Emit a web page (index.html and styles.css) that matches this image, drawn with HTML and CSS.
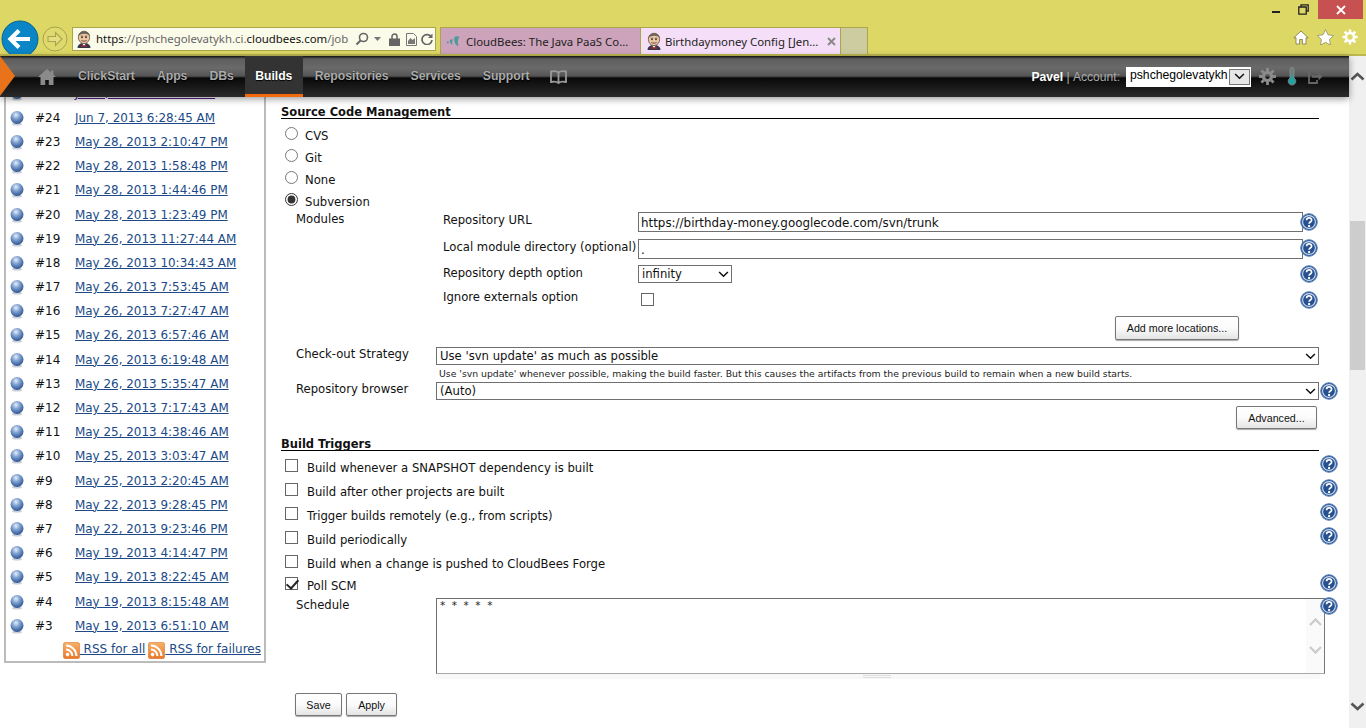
FILE: index.html
```html
<!DOCTYPE html>
<html lang="en">
<head>
<meta charset="utf-8">
<title>Birthdaymoney Config [Jenkins]</title>
<link rel="stylesheet" href="styles.css">
</head>
<body>
<svg class="defs" width="0" height="0" aria-hidden="true">
  <defs>
    <radialGradient id="ballg" cx="0.42" cy="0.3" r="0.75">
      <stop offset="0" stop-color="#e8eff8"/><stop offset="0.4" stop-color="#7ea2d2"/><stop offset="1" stop-color="#264a86"/>
    </radialGradient>
    <linearGradient id="rssg" x1="0" y1="0" x2="0" y2="1">
      <stop offset="0" stop-color="#f6b26a"/><stop offset="1" stop-color="#e9772a"/>
    </linearGradient>
    <symbol id="help" viewBox="0 0 18 18">
      <circle cx="9" cy="9" r="8.3" fill="#2f5b9c" stroke="#5c83b8" stroke-width="1"/>
      <circle cx="9" cy="9" r="6.4" fill="#26508f" stroke="#cfdcee" stroke-width="1.1"/>
      <path d="M6.6 7.2c0-3.1 5-3.1 5 0 0 1.8-2.5 1.9-2.5 3.6" fill="none" stroke="#fff" stroke-width="1.7"/>
      <rect x="8.1" y="12" width="2" height="2" fill="#fff"/>
    </symbol>
    <symbol id="ball" viewBox="0 0 14 16">
      <ellipse cx="7" cy="14.2" rx="5" ry="1.4" fill="#c9cfd8"/>
      <circle cx="7" cy="7.5" r="6.5" fill="url(#ballg)"/>
    </symbol>
    <symbol id="rss" viewBox="0 0 17 17">
      <rect x="0.3" y="0.3" width="16.4" height="16.4" rx="2.5" fill="url(#rssg)" stroke="#d9772e" stroke-width="0.6"/>
      <circle cx="4.6" cy="12.6" r="1.8" fill="#fff"/>
      <path d="M3 7.6a6.4 6.4 0 0 1 6.4 6.4M3 3.6A10.4 10.4 0 0 1 13.4 14" fill="none" stroke="#fff" stroke-width="2"/>
    </symbol>
    <symbol id="jenkins" viewBox="0 0 16 18">
      <path d="M1.500 18c0-3 2.500-5 6.500-5s6.500 2 6.500 5z" fill="#33384a"/>
      <path d="M6 13.200 8 16l2-2.800z" fill="#fff"/>
      <path d="M5.400 14.500 8 15.800l2.600-1.300v2.600L8 16.400l-2.600.7z" fill="#b3272d"/>
      <ellipse cx="8" cy="7.400" rx="5.600" ry="6.200" fill="#eec9a5" stroke="#5f4a3a" stroke-width="0.8"/>
      <path d="M2.400 6C2.400.2 13.600-.4 13.800 6 11.500 3.200 5.500 3 2.400 6z" fill="#6b6358"/>
      <path d="M5.400 10.400c1.500 1 3.700 1 5.200 0" fill="none" stroke="#5f4a3a"/>
      <path d="M4.800 6.200h2.400M8.800 6.200h2.400" stroke="#4a3a2a" stroke-width=".8"/>
      <circle cx="6" cy="7.500" r=".8" fill="#222"/><circle cx="10" cy="7.500" r=".8" fill="#222"/>
    </symbol>
    <symbol id="chev" viewBox="0 0 12 8">
      <path d="M1 1.200 6 6l5-4.800" fill="none" stroke="#111" stroke-width="1.8"/>
    </symbol>
  </defs>
</svg>

<header class="chrome">
  <div class="winbar">
    <span class="win-min"></span>
    <svg class="win-restore" width="11" height="11" viewBox="0 0 11 11"><path d="M3 2.500V.8h7.200v6.400H8.200M.8 3h7.400v7.200H.8z" fill="none" stroke="#222" stroke-width="1.300"/></svg>
    <span class="win-close"><svg width="10" height="10" viewBox="0 0 10 10"><path d="M1 1l8 8M9 1l-8 8" stroke="#fff" stroke-width="1.800"/></svg></span>
  </div>
  <div class="toolbar">
    <svg class="btn-back" width="38" height="38" viewBox="0 0 38 38"><circle cx="19" cy="19" r="18" fill="#0a85c6" stroke="#06648f"/><path d="M9 19h20M18 10.500 9.500 19l8.500 8.500" fill="none" stroke="#fff" stroke-width="4.200"/></svg>
    <svg class="btn-fwd" width="26" height="26" viewBox="0 0 26 26"><circle cx="13" cy="13" r="12" fill="#dfd96e" stroke="#a9a34a"/><path d="M6 10.500h7.500V6.500L20 13l-6.500 6.500v-4H6z" fill="#e4de80" stroke="#a9a34a" stroke-width="1.100"/></svg>
    <div class="addr">
      <svg class="fav" width="16" height="18"><use href="#jenkins"/></svg>
      <span class="url">https<span class="dim">://pshchegolevatykh.ci.</span>cloudbees.com<span class="dim">/job</span></span>
      <svg class="a-search" width="14" height="14" viewBox="0 0 14 14"><circle cx="8.500" cy="5.500" r="4" fill="none" stroke="#666" stroke-width="1.600"/><path d="M5.500 8.500 1.500 12.500" stroke="#666" stroke-width="2"/></svg>
      <svg class="a-caret" width="7" height="4" viewBox="0 0 7 4"><path d="M0 0h7L3.500 4z" fill="#777"/></svg>
      <svg class="a-lock" width="11" height="13" viewBox="0 0 11 13"><path d="M3 6V3.500a2.500 2.500 0 0 1 5 0V6" fill="none" stroke="#666" stroke-width="1.500"/><rect y="5.500" width="11" height="7.500" fill="#666"/></svg>
      <svg class="a-page" width="11" height="13" viewBox="0 0 11 13"><path d="M.5.500h7l3 3v9H.5z" fill="none" stroke="#777"/><path d="M2 8l2.500-3 2 2L9 5v6H2z" fill="#777"/></svg>
      <svg class="a-reload" width="12" height="12" viewBox="0 0 12 12"><path d="M10.300 4A5 5 0 1 0 11 7" fill="none" stroke="#666" stroke-width="1.700"/><path d="M11.500.5v4.500H7z" fill="#666"/></svg>
    </div>
    <div class="tab tab-off">
      <svg class="tab-ico" width="15" height="12" viewBox="0 0 14 12"><path d="M8 2c2-1 4-1 5 0-2 2-2 6-1 9-3 0-5-5-4-9zM3.500 5c1-.6 2-.8 3-.5-1 1.500-1 3.500-.5 5-2 0-3-2.500-2.500-4.500zM.3 6.500 2 6v2.500H.8z" fill="#4d9a9a"/></svg>
      <span class="tab-text">CloudBees: The Java PaaS Co...</span>
    </div>
    <div class="tab tab-on">
      <svg class="tab-ico" width="16" height="18"><use href="#jenkins"/></svg>
      <span class="tab-text">Birthdaymoney Config [Jen...</span>
      <svg class="tab-x" width="9" height="9" viewBox="0 0 9 9"><path d="M1 1l7 7M8 1 1 8" stroke="#8a8a8a" stroke-width="2"/></svg>
    </div>
    <div class="tab-new"></div>
    <div class="tool-icons">
      <svg width="16" height="15" viewBox="0 0 16 15"><path d="M8 1 .8 7.800h2.200V14h3.600V9.500h2.800V14H13V7.800h2.200z" fill="#fff" stroke="#77744a" stroke-width=".8"/></svg>
      <svg width="17" height="16" viewBox="0 0 17 16"><path d="M8.500.6 11 5.800l5.500.8-4 3.900 1 5.500-5-2.700-5 2.700 1-5.500-4-3.900 5.500-.8z" fill="#fff" stroke="#77744a" stroke-width=".6"/></svg>
      <svg width="16" height="16" viewBox="0 0 16 16"><circle cx="8" cy="8" r="4" fill="none" stroke="#fff" stroke-width="2.600"/><path d="M8 .5v3M8 12.500v3M.5 8h3M12.500 8h3M2.700 2.700l2.100 2.100M11.200 11.200l2.100 2.100M13.300 2.700l-2.100 2.100M4.800 11.200l-2.100 2.100" stroke="#fff" stroke-width="2.400"/></svg>
    </div>
  </div>
</header>

<div class="viewport">
  <div class="page">
    <nav class="nav">
      <span class="nav-arrow"></span>
      <svg class="nav-home" width="18" height="16" viewBox="0 0 18 16"><path d="M9 0 0 8h2.500v8h4.700v-5h3.600v5h4.700V8H18l-2.500-2.300V1.500h-2.500v2z" fill="#8b8b8b"/></svg>
      <a class="nav-item">ClickStart</a>
      <a class="nav-item">Apps</a>
      <a class="nav-item">DBs</a>
      <a class="nav-item nav-active">Builds</a>
      <a class="nav-item nav-after">Repositories</a>
      <a class="nav-item">Services</a>
      <a class="nav-item">Support</a>
      <svg class="nav-book" width="17" height="14" viewBox="0 0 17 14"><path d="M8.500 2.500C7 1 4 1 1 1.500V12c3-.5 6-.5 7.500 1 1.500-1.500 4.500-1.500 7.500-1V1.500C13 1 10 1 8.500 2.500zM8.500 2.500V13" fill="none" stroke="#9a9a9a" stroke-width="1.800"/></svg>
      <div class="nav-user">
        <b class="nav-name">Pavel</b><span class="nav-acc">&nbsp;|&nbsp;Account:</span>
        <div class="acct">
          <select class="acct-select"><option>pshchegolevatykh</option></select>
          <span class="acct-btn"><svg width="11" height="7"><use href="#chev"/></svg></span>
        </div>
        <svg class="nav-gear" width="17" height="17" viewBox="0 0 16 16"><circle cx="8" cy="8" r="3.800" fill="none" stroke="#8b8b8b" stroke-width="3"/><path d="M8 0v3M8 13v3M0 8h3M13 8h3M2.300 2.300l2.200 2.200M11.500 11.500l2.200 2.200M13.700 2.300l-2.200 2.200M4.500 11.500l-2.200 2.200" stroke="#8b8b8b" stroke-width="2.600"/></svg>
        <svg class="nav-temp" width="10" height="19" viewBox="0 0 10 19"><path d="M3 2.500a2 2 0 0 1 4 0V11a3.800 3.800 0 1 1-4 0z" fill="#6f7a7c" stroke="#8d9596" stroke-width=".7"/><circle cx="5" cy="14.300" r="3" fill="#19a7a4"/><rect x="4" y="8" width="2" height="5" fill="#19a7a4"/></svg>
        <svg class="nav-exit" width="15" height="15" viewBox="0 0 15 15"><path d="M9 4V1H1v13h8v-3" fill="none" stroke="#666" stroke-width="1.800"/><path d="M4 6.300h6.500V3.500l4 4-4 4V8.700H4z" fill="#666"/></svg>
      </div>
    </nav>

    <div class="body">
      <aside class="history">
        <div class="hist-clip">
          <div class="hrow hrow-cut"><svg class="ball"><use href="#ball"/></svg><span class="bnum">#25</span><a class="blink visited">Jun 7, 2013 6:58:45 AM</a></div>
          <div class="hrow"><svg class="ball"><use href="#ball"/></svg><span class="bnum">#24</span><a class="blink">Jun 7, 2013 6:28:45 AM</a></div>
          <div class="hrow"><svg class="ball"><use href="#ball"/></svg><span class="bnum">#23</span><a class="blink">May 28, 2013 2:10:47 PM</a></div>
          <div class="hrow"><svg class="ball"><use href="#ball"/></svg><span class="bnum">#22</span><a class="blink">May 28, 2013 1:58:48 PM</a></div>
          <div class="hrow"><svg class="ball"><use href="#ball"/></svg><span class="bnum">#21</span><a class="blink">May 28, 2013 1:44:46 PM</a></div>
          <div class="hrow"><svg class="ball"><use href="#ball"/></svg><span class="bnum">#20</span><a class="blink">May 28, 2013 1:23:49 PM</a></div>
          <div class="hrow"><svg class="ball"><use href="#ball"/></svg><span class="bnum">#19</span><a class="blink">May 26, 2013 11:27:44 AM</a></div>
          <div class="hrow"><svg class="ball"><use href="#ball"/></svg><span class="bnum">#18</span><a class="blink">May 26, 2013 10:34:43 AM</a></div>
          <div class="hrow"><svg class="ball"><use href="#ball"/></svg><span class="bnum">#17</span><a class="blink">May 26, 2013 7:53:45 AM</a></div>
          <div class="hrow"><svg class="ball"><use href="#ball"/></svg><span class="bnum">#16</span><a class="blink">May 26, 2013 7:27:47 AM</a></div>
          <div class="hrow"><svg class="ball"><use href="#ball"/></svg><span class="bnum">#15</span><a class="blink">May 26, 2013 6:57:46 AM</a></div>
          <div class="hrow"><svg class="ball"><use href="#ball"/></svg><span class="bnum">#14</span><a class="blink">May 26, 2013 6:19:48 AM</a></div>
          <div class="hrow"><svg class="ball"><use href="#ball"/></svg><span class="bnum">#13</span><a class="blink">May 26, 2013 5:35:47 AM</a></div>
          <div class="hrow"><svg class="ball"><use href="#ball"/></svg><span class="bnum">#12</span><a class="blink">May 25, 2013 7:17:43 AM</a></div>
          <div class="hrow"><svg class="ball"><use href="#ball"/></svg><span class="bnum">#11</span><a class="blink">May 25, 2013 4:38:46 AM</a></div>
          <div class="hrow"><svg class="ball"><use href="#ball"/></svg><span class="bnum">#10</span><a class="blink">May 25, 2013 3:03:47 AM</a></div>
          <div class="hrow"><svg class="ball"><use href="#ball"/></svg><span class="bnum">#9</span><a class="blink">May 25, 2013 2:20:45 AM</a></div>
          <div class="hrow"><svg class="ball"><use href="#ball"/></svg><span class="bnum">#8</span><a class="blink">May 22, 2013 9:28:45 PM</a></div>
          <div class="hrow"><svg class="ball"><use href="#ball"/></svg><span class="bnum">#7</span><a class="blink">May 22, 2013 9:23:46 PM</a></div>
          <div class="hrow"><svg class="ball"><use href="#ball"/></svg><span class="bnum">#6</span><a class="blink">May 19, 2013 4:14:47 PM</a></div>
          <div class="hrow"><svg class="ball"><use href="#ball"/></svg><span class="bnum">#5</span><a class="blink">May 19, 2013 8:22:45 AM</a></div>
          <div class="hrow"><svg class="ball"><use href="#ball"/></svg><span class="bnum">#4</span><a class="blink">May 19, 2013 8:15:48 AM</a></div>
          <div class="hrow"><svg class="ball"><use href="#ball"/></svg><span class="bnum">#3</span><a class="blink">May 19, 2013 6:51:10 AM</a></div>
          <div class="rss-row">
            <a class="rss"><svg class="rss-ico"><use href="#rss"/></svg> RSS for all</a>
            <a class="rss"><svg class="rss-ico"><use href="#rss"/></svg> RSS for failures</a>
          </div>
        </div>
      </aside>

      <main class="form">
        <h2 class="sec sec-scm">Source Code Management</h2>
        <div class="radios">
          <label class="opt"><input type="radio" name="scm" class="radio">CVS</label>
          <label class="opt"><input type="radio" name="scm" class="radio">Git</label>
          <label class="opt"><input type="radio" name="scm" class="radio">None</label>
          <label class="opt"><input type="radio" name="scm" class="radio" checked>Subversion</label>
        </div>

        <div class="modules">
          <div class="mod-label">Modules</div>
          <div class="mod-grid">
            <div class="mrow mrow-url">
              <span class="mname">Repository URL</span>
              <input class="text" value="https://birthday-money.googlecode.com/svn/trunk">
              <svg class="help"><use href="#help"/></svg>
            </div>
            <div class="mrow mrow-local">
              <span class="mname">Local module directory (optional)</span>
              <input class="text" value=".">
              <svg class="help"><use href="#help"/></svg>
            </div>
            <div class="mrow mrow-depth">
              <span class="mname">Repository depth option</span>
              <div class="sel sel-depth"><select class="sel-input"><option>infinity</option></select><svg class="chev"><use href="#chev"/></svg></div>
              <svg class="help help-depth"><use href="#help"/></svg>
            </div>
            <div class="mrow mrow-ign">
              <span class="mname">Ignore externals option</span>
              <span class="ign-box"><input type="checkbox" class="check"></span>
              <svg class="help help-ign"><use href="#help"/></svg>
            </div>
            <div class="add-row"><button class="btn btn-add">Add more locations...</button></div>
          </div>
        </div>

        <div class="frow frow-co">
          <span class="flabel">Check-out Strategy</span>
          <div class="sel sel-wide"><select class="sel-input"><option>Use 'svn update' as much as possible</option></select><svg class="chev"><use href="#chev"/></svg></div>
        </div>
        <p class="hint">Use 'svn update' whenever possible, making the build faster. But this causes the artifacts from the previous build to remain when a new build starts.</p>
        <div class="frow frow-browser">
          <span class="flabel">Repository browser</span>
          <div class="sel sel-wide"><select class="sel-input"><option>(Auto)</option></select><svg class="chev"><use href="#chev"/></svg></div>
          <svg class="help help-browser"><use href="#help"/></svg>
        </div>
        <div class="adv-row"><button class="btn btn-adv">Advanced...</button></div>

        <h2 class="sec sec-trig">Build Triggers</h2>
        <div class="trig"><label class="tlabel"><input type="checkbox" class="check">Build whenever a SNAPSHOT dependency is built</label><svg class="help"><use href="#help"/></svg></div>
        <div class="trig"><label class="tlabel"><input type="checkbox" class="check">Build after other projects are built</label><svg class="help"><use href="#help"/></svg></div>
        <div class="trig"><label class="tlabel"><input type="checkbox" class="check">Trigger builds remotely (e.g., from scripts)</label><svg class="help"><use href="#help"/></svg></div>
        <div class="trig"><label class="tlabel"><input type="checkbox" class="check">Build periodically</label><svg class="help"><use href="#help"/></svg></div>
        <div class="trig"><label class="tlabel"><input type="checkbox" class="check">Build when a change is pushed to CloudBees Forge</label></div>
        <div class="trig trig-poll"><label class="tlabel"><input type="checkbox" class="check" checked>Poll SCM</label><svg class="help"><use href="#help"/></svg></div>
        <div class="sched">
          <span class="flabel">Schedule</span>
          <div class="ta">
            <textarea class="ta-input" spellcheck="false">* * * * *</textarea>
            <div class="ta-bar">
              <svg width="13" height="8" viewBox="0 0 13 8"><path d="M1 7l5.500-5.500L12 7" fill="none" stroke="#ccc" stroke-width="2.400"/></svg>
              <svg width="13" height="8" viewBox="0 0 13 8"><path d="M1 1l5.500 5.500L12 1" fill="none" stroke="#ccc" stroke-width="2.400"/></svg>
            </div>
            <svg class="help help-ta"><use href="#help"/></svg>
          </div>
        </div>
        <div class="ta-grip"><span class="grip"></span></div>
        <div class="save-bar">
          <button class="btn btn-save">Save</button>
          <button class="btn btn-apply">Apply</button>
        </div>
      </main>
    </div>
  </div>

  <div class="sbar">
    <svg class="sb-arrow" width="15" height="9" viewBox="0 0 15 9"><path d="M1.500 7.500l6-5.500 6 5.500" fill="none" stroke="#555" stroke-width="2.600"/></svg>
    <div class="sb-thumb"></div>
    <svg class="sb-arrow sb-down" width="15" height="9" viewBox="0 0 15 9"><path d="M1.500 1.500l6 5.500 6-5.500" fill="none" stroke="#555" stroke-width="2.600"/></svg>
  </div>
</div>
</body>
</html>
```
FILE: styles.css
```css
* { box-sizing: border-box; }
html, body { margin: 0; padding: 0; height: 728px; overflow: hidden; background: #fff; }
body { display: flex; flex-direction: column; font: 12px "DejaVu Sans", Verdana, sans-serif; color: #111; }
.defs { position: absolute; }

.chrome { flex: 0 0 56px; height: 56px; background: #ddd766; border-bottom: 2px solid #bdb850; overflow: hidden; position: relative; }
.winbar { height: 19px; display: flex; justify-content: flex-end; align-items: flex-start; padding-right: 3px; }
.win-min { width: 8px; height: 2px; background: #222; margin: 11px 18px 0 0; }
.win-restore { margin: 4px 9px 0 0; }
.win-close { width: 45px; height: 19px; background: #c75050; display: flex; align-items: center; justify-content: center; }
.toolbar { height: 35px; display: flex; align-items: flex-start; position: relative; }
.btn-back { margin: 1px 0 0 1px; flex: none; }
.btn-fwd { margin: 7px 0 0 3px; flex: none; }
.addr { width: 364px; height: 24px; margin: 8px 0 0 4px; background: #fbfbe9; border: 1px solid #aaa54a; display: flex; align-items: center; padding-left: 3px; flex: none; }
.fav { flex: none; }
.url { font: 11.400px "Noto Sans", sans-serif; color: #111; flex: 0 0 254px; margin-left: 4px; white-space: nowrap; overflow: hidden; line-height: 20px; }
.dim { color: #666; }
.a-search { margin-left: 5px; flex: none; }
.a-caret { margin-left: 5px; flex: none; }
.a-lock { margin-left: 8px; flex: none; }
.a-page { margin-left: 6px; flex: none; }
.a-reload { margin-left: 4px; flex: none; }
.tab { height: 27px; margin-top: 8px; display: flex; align-items: center; border: 1px solid #aaa54a; border-bottom: 0; padding-left: 5px; gap: 5px; font: 11.400px "Noto Sans", sans-serif; color: #222; flex: none; }
.tab-ico { flex: none; }
.tab-off { width: 201px; margin-left: 4px; background: #cda3bb; }
.tab-on { width: 200px; background: #f5dff8; border-left: 0; gap: 3px; }
.tab-x { margin-left: 6px; flex: none; }
.tab-text { white-space: nowrap; }
.tab-new { width: 27px; height: 27px; margin-top: 8px; background: #cdcba0; border: 1px solid #aaa54a; border-left: 0; border-bottom: 0; flex: none; }
.tool-icons { margin: 8px 0 0 auto; display: flex; gap: 8px; padding-right: 8px; align-items: center; height: 20px; }

.viewport { flex: 1; display: flex; min-height: 0; }
.page { flex: 0 0 1349px; display: flex; flex-direction: column; min-width: 0; }
.sbar { flex: 0 0 17px; background: #f0f0f0; position: relative; padding-left: 1px; }
.sb-arrow { position: absolute; left: 1px; top: 16px; }
.sb-down { top: 646px; }
.sb-thumb { position: absolute; left: 1px; top: 165px; width: 15px; height: 149px; background: #cdcdcd; }

.nav { flex: 0 0 41px; height: 41px; display: flex; align-items: center; position: relative; z-index: 2; padding-left: 38px;
  background: linear-gradient(#111 0, #5e5e5e 3px, #6a6a6a 12px, #555 20px, #0a0a0a 22px, #101010 26px, #2a2a2a 41px);
  box-shadow: 0 2px 7px rgba(0,0,0,.4); }
.nav-arrow { position: absolute; left: 0; top: 0; width: 0; height: 0; border-left: 15px solid #e8731a; border-top: 20.5px solid transparent; border-bottom: 20.5px solid transparent; }
.nav-home { margin-right: 11px; flex: none; }
.nav-item { font: bold 12.200px "Liberation Sans", Arial, sans-serif; color: #ababab; height: 41px; line-height: 41px; padding: 0 11px; text-shadow: 0 1px 1px #000; }
.nav-active { color: #fff; background: #333; border-bottom: 3px solid #f26a0c; width: 58px; padding: 0; text-align: center; }
.nav-after { padding-left: 12px; }
.nav-book { margin-left: 10px; flex: none; }
.nav-user { margin-left: auto; display: flex; align-items: center; font: 12.100px "Liberation Sans", Arial, sans-serif; color: #aaa; padding-right: 26px; }
.nav-name { color: #fff; }
.acct { position: relative; width: 125px; height: 20px; background: #fff; margin: 0 8px 0 6px; }
.acct-select { appearance: none; -webkit-appearance: none; width: 100%; height: 20px; border: 0; background: transparent; font: 12.200px "Liberation Sans", Arial, sans-serif; color: #000; padding: 0 0 3px 4px; }
.acct-btn { position: absolute; right: 1px; top: 2px; width: 21px; height: 16px; background: #e6e6e6; border: 1px solid #777; display: flex; align-items: center; justify-content: center; }
.nav-gear { margin-right: 11px; }
.nav-temp { margin-right: 11px; }

.body { flex: 1; display: flex; min-height: 0; }
.history { flex: 0 0 266px; padding-left: 4px; height: 566px; overflow: hidden; }
.hist-clip { width: 262px; border: solid #bbb; border-width: 0 2px 2px; position: relative; overflow: hidden; padding-top: .1px; margin-top: -15.580px; height: 581.580px; }
.hrow { height: 24.190px; display: flex; align-items: center; padding-left: 4px; }
.hrow-cut { padding-bottom: 2px; }
.ball { width: 14px; height: 16px; margin-right: 11px; flex: none; }
.bnum { width: 40px; }
.blink { color: #204a87; text-decoration: underline; white-space: nowrap; font-size: 11.950px; }
.visited { color: #551a8b; }
.rss-row { display: flex; justify-content: flex-end; gap: 3px; padding-right: 3px; height: 24px; align-items: center; margin-top: 1px; }
.rss { color: #204a87; text-decoration: underline; white-space: pre; }
.rss-ico { width: 17px; height: 17px; vertical-align: -6px; }

.form { flex: 1; min-width: 0; padding: 7px 11px 0 15px; overflow: hidden; font-size: 11.650px; }
.sec { margin: 0 19px 0 0; font: bold 11.500px "DejaVu Sans", Verdana, sans-serif; color: #111; border-bottom: 1px solid #000; height: 15px; line-height: 17px; }
.radios { padding-top: 5px; }
.opt { display: flex; align-items: center; height: 22px; padding: 2px 0 0 4px; }
.radio { width: 13px; height: 13px; margin: 0 7px 5px 0; accent-color: #333; }

.modules { display: flex; padding-left: 15px; height: 135px; }
.mod-label { width: 147px; line-height: 14px; }
.mod-grid { flex: 1; }
.mrow { display: flex; align-items: flex-start; }
.mrow-url { height: 27px; }
.mrow-local { height: 26px; }
.mrow-depth { height: 26px; }
.mrow-ign { height: 25px; }
.mname { width: 195px; flex: none; white-space: nowrap; line-height: 16px; }
.mrow-ign .mname { margin-top: -2px; }
.text { width: 665px; height: 20px; border: 1px solid #707070; padding: 1px 3px 0 2px; font: 11.900px "DejaVu Sans", Verdana, sans-serif; color: #111; flex: none; outline: 0; }
.help { width: 18px; height: 18px; flex: none; margin: 1px 0 0 -3px; }
.mrow-local .help { margin-top: 0; }
.help-depth { margin-left: 568px; margin-top: 0; }
.help-ign { margin-left: 566px; margin-top: 0; }
.sel { position: relative; flex: none; }
.sel-input { appearance: none; -webkit-appearance: none; display: block; width: 100%; height: 100%; border: 1px solid #707070; background: #fff; border-radius: 0; padding: 0 0 0 3px; font: 11.650px "DejaVu Sans", Verdana, sans-serif; color: #111; }
.chev { position: absolute; right: 3px; top: 6px; width: 11px; height: 7px; }
.sel-depth { width: 94px; height: 18px; }
.ign-box { width: 96px; flex: none; padding: 2px 0 0 3px; display: flex; }
.check { appearance: none; -webkit-appearance: none; width: 13px; height: 13px; margin: 0; flex: none; background: #fff; border: 1px solid #666; border-radius: 0; position: relative; }
.check:checked::after { content: ""; position: absolute; left: 3px; top: -1px; width: 5px; height: 10px; border: solid #222; border-width: 0 2.200px 2.200px 0; transform: rotate(42deg); }
.add-row { display: flex; justify-content: flex-end; padding-right: 99px; }
.btn { height: 24px; font: 10.700px "Liberation Sans", Arial, sans-serif; color: #111; border: 1px solid #777; border-radius: 2px; padding: 0; background: linear-gradient(#fff, #fbfbfb 50%, #e4e4e4); box-shadow: 0 1px 1px #aaa; }
.btn-add { width: 124px; }

.frow { display: flex; padding-left: 15px; align-items: flex-start; }
.flabel { width: 140px; flex: none; white-space: nowrap; line-height: 14px; }
.frow-co { height: 18px; }
.sel-wide { width: 883px; height: 18px; }
.hint { margin: 0; height: 17px; padding: 1px 0 0 158px; font-size: 9.300px; line-height: 15px; white-space: nowrap; color: #222; }
.frow-browser { height: 18px; }
.help-browser { margin: 0 0 0 1px; }
.adv-row { display: flex; justify-content: flex-end; padding: 6px 21px 0 0; height: 36px; }
.btn-adv { width: 81px; height: 23px; }
.trig { display: flex; align-items: flex-start; justify-content: space-between; height: 24px; flex: none; }
.tlabel { display: flex; align-items: flex-start; padding-left: 4px; gap: 9px; line-height: 14px; padding-top: 6px; }
.tlabel .check { margin-top: -2px; }
.trig .help { margin: 0; }
.trig-poll { height: 22px; }
.trig-poll .tlabel { padding-top: 4px; }
.trig-poll .help { margin-top: -1px; }
.sec-trig + .trig { margin-top: 4px; }
.sched { display: flex; padding-left: 15px; align-items: flex-start; margin-top: 1px; }
.ta { position: relative; width: 890px; height: 76px; }
.ta-input { display: block; width: 889px; height: 76px; border: 1px solid #707070; border-right-color: #777; border-bottom-color: #aaa; padding: 0 3px; font: 10.500px "DejaVu Sans", Verdana, sans-serif; letter-spacing: 1.600px; color: #222; resize: none; outline: 0; overflow: hidden; background: #fff; }
.ta-bar { position: absolute; right: 2px; top: 1px; width: 18px; height: 74px; background: #fafafa; display: flex; flex-direction: column; align-items: center; padding-top: 19px; gap: 20px; }
.help-ta { position: absolute; left: 884px; top: -1px; margin: 0; }
.ta-grip { height: 5px; width: 884px; margin-left: 155px; background: #f8f8f8; display: flex; justify-content: center; align-items: center; padding-right: 2px; }
.grip { width: 28px; height: 3px; border: solid #ddd; border-width: 1px 0; }
.save-bar { display: flex; gap: 3px; padding: 14px 0 0 14px; }
.btn-save { width: 47px; height: 23px; }
.btn-apply { width: 51px; height: 23px; margin-left: 1px; }
```
